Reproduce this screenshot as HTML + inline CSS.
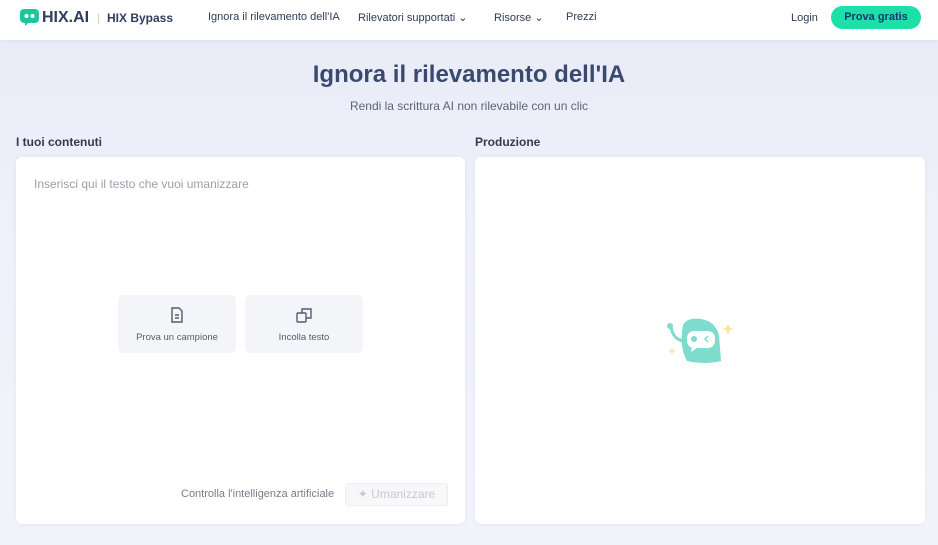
<!DOCTYPE html>
<html><head><style>
*{box-sizing:border-box;margin:0;padding:0}
body{width:938px;height:545px;overflow:hidden;font-family:"Liberation Sans",sans-serif;background:linear-gradient(180deg,#e8eaf7 0%,#eef0fa 40%,#f3f4fb 100%);position:relative}
.hdr{position:absolute;top:0;left:0;width:938px;height:40px;background:#fff;box-shadow:0 1px 3px rgba(0,0,0,.05)}
.a{position:absolute;white-space:nowrap}
.nav{font-size:11px;color:#2e3a59;top:11px}
.card{position:absolute;top:157px;height:367px;background:#fff;border-radius:6px;box-shadow:0 1px 4px rgba(60,70,120,.08)}
.btn{position:absolute;top:295px;width:118px;height:58px;background:#f4f5f8;border-radius:6px;font-size:9.5px;color:#555d6b;text-align:center}
</style></head><body>
<div class="hdr">
<svg class="a" style="left:20px;top:9px" width="19" height="17" viewBox="0 0 19 17"><rect x="0" y="0" width="19" height="14" rx="4" fill="#1ec6a0"/><path d="M5 13 L5 17 L9 13Z" fill="#1ec6a0"/><circle cx="6.5" cy="7" r="2" fill="#fff"/><circle cx="12.5" cy="7" r="2" fill="#fff"/></svg>
<div class="a" style="left:42px;top:9px;font-size:16px;font-weight:bold;color:#2e3e5c">HIX.AI</div>
<div class="a" style="left:97px;top:11px;font-size:12px;color:#ccc">|</div>
<div class="a" style="left:107px;top:11px;font-size:12px;font-weight:bold;color:#2e3e5c">HIX Bypass</div>
<div class="a nav" style="left:208px">Ignora il rilevamento dell'IA</div>
<div class="a nav" style="left:358px">Rilevatori supportati ⌄</div>
<div class="a nav" style="left:494px">Risorse ⌄</div>
<div class="a nav" style="left:566px">Prezzi</div>
<div class="a nav" style="left:791px;top:12px">Login</div>
<div class="a" style="left:831px;top:6px;width:90px;height:23px;border-radius:12px;background:#1de0a8;color:#1b3470;font-size:11px;font-weight:bold;text-align:center;line-height:23px">Prova gratis</div>
</div>
<div class="a" style="left:0;width:938px;top:61px;text-align:center;font-size:24px;font-weight:bold;color:#3a4a6e">Ignora il rilevamento dell'IA</div>
<div class="a" style="left:0;width:938px;top:99px;text-align:center;font-size:12px;color:#5b6478">Rendi la scrittura AI non rilevabile con un clic</div>
<div class="a" style="left:16px;top:135px;font-size:12px;font-weight:bold;color:#333c4e">I tuoi contenuti</div>
<div class="a" style="left:475px;top:135px;font-size:12px;font-weight:bold;color:#333c4e">Produzione</div>
<div class="card" style="left:16px;width:449px"></div>
<div class="card" style="left:475px;width:450px"></div>
<div class="a" style="left:34px;top:177px;font-size:12px;color:#9aa0aa">Inserisci qui il testo che vuoi umanizzare</div>
<div class="btn" style="left:118px"><svg style="margin-top:12px" width="14" height="16" viewBox="0 0 14 16" fill="none" stroke="#555d6b" stroke-width="1.4"><path d="M2 1h7l3 3v11H2z"/><path d="M5 8h4M5 11h4"/></svg><div style="margin-top:6px">Prova un campione</div></div>
<div class="btn" style="left:245px"><svg style="margin-top:12px" width="16" height="16" viewBox="0 0 16 16" fill="none" stroke="#555d6b" stroke-width="1.4"><rect x="1" y="6" width="9" height="9" rx="1"/><path d="M6 6V2h9v9h-5"/></svg><div style="margin-top:6px">Incolla testo</div></div>
<div class="a" style="left:181px;top:488px;font-size:11px;color:#777e8a">Controlla l'intelligenza artificiale</div>
<div class="a" style="left:345px;top:483px;width:103px;height:23px;border:1px solid #eceef2;background:#f7f8fa;border-radius:3px;color:#c5c9d0;font-size:12px;text-align:center;line-height:21px">✦ Umanizzare</div>
<svg class="a" style="left:665px;top:317px" width="72" height="50" viewBox="0 0 72 50"><path d="M18 8 Q22 0 36 2 Q50 4 54 18 L56 44 Q40 48 22 44 Q14 30 18 8Z" fill="#7fdccc"/><path d="M6 10 Q8 22 18 24" stroke="#7fdccc" stroke-width="3" fill="none"/><circle cx="5" cy="9" r="3" fill="#7fdccc"/><rect x="22" y="14" width="28" height="17" rx="7" fill="#fff"/><path d="M27 30l-1 5 6-4z" fill="#fff"/><circle cx="29" cy="22" r="3" fill="#7fdccc"/><path d="M43 19l-3 3 3 3" stroke="#7fdccc" stroke-width="1.5" fill="none"/><path d="M63 6l1.5 4.5 4.5 1.5-4.5 1.5-1.5 4.5-1.5-4.5-4.5-1.5 4.5-1.5z" fill="#fde3a0"/><path d="M7 30l1 3 3 1-3 1-1 3-1-3-3-1 3-1z" fill="#fde3a0"/></svg>
</body></html>
